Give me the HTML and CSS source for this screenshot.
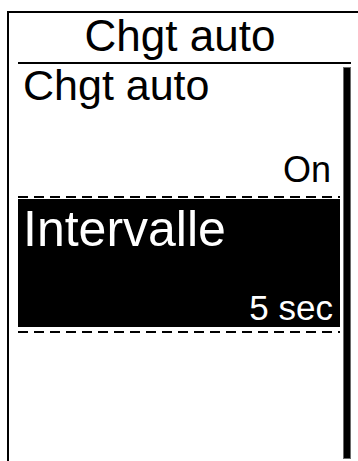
FILE: index.html
```
<!DOCTYPE html>
<html lang="fr">
<head>
    <meta charset="UTF-8">
    <meta name="viewport" content="width=device-width, initial-scale=1.0">
    <title>Chgt auto</title>
    <link rel="stylesheet" href="styles.css">
</head>
<body>
    <div class="screen">
        <div class="title">Chgt auto</div>
        <div class="rule"></div>
        <div class="content">
            <div class="menu">
                <div class="item">
                    <span class="label">Chgt auto</span>
                    <span class="value">On</span>
                </div>
                <div class="sep"></div>
                <div class="item selected">
                    <span class="label">Intervalle</span>
                    <span class="value">5 sec</span>
                </div>
                <div class="sep sep-last"></div>
            </div>
            <div class="scrollbar"></div>
        </div>
    </div>
</body>
</html>
```
FILE: styles.css
```
html,
body {
    margin: 0;
    padding: 0;
    background-color: #ffffff;
    overflow: hidden;
}

body {
    font-family: "Liberation Sans", Arial, sans-serif;
    color: #000;
    width: 358px;
    height: 461px;
}

.screen {
    margin: 11px 0 0 7px;
    border-left: 2px solid #000;
    border-top: 2px solid #000;
    width: 349px;
    height: 448px;
}

.title {
    width: 342px;
    height: 49px;
    line-height: 45px;
    font-size: 44px;
    text-align: center;
}

.rule {
    width: 333px;
    height: 2px;
    margin-left: 9px;
    background-color: #000;
}

.content {
    display: flex;
    align-items: flex-start;
    margin-left: 9px;
}

.menu {
    width: 322px;
}

.item {
    display: flex;
    flex-direction: column;
    justify-content: space-between;
    box-sizing: border-box;
    height: 130px;
    padding: 0 9px 6px 5px;
}

.item .label {
    font-size: 43px;
    line-height: 43px;
}

.item .value {
    align-self: flex-end;
    font-size: 36px;
    line-height: 36px;
}

.item.selected {
    height: 128px;
    padding: 6px 7px 2px 5px;
    margin-top: 1px;
    background-color: #000;
    color: #fff;
}

.item.selected .label {
    font-size: 50px;
    line-height: 49px;
}

.item.selected .value {
    font-size: 35px;
    line-height: 35px;
}

.sep {
    height: 2px;
    margin-top: 2px;
    background: repeating-linear-gradient(to right, #000 0, #000 10px, transparent 10px, transparent 16px);
}

.sep-last {
    margin-top: 4px;
}

.scrollbar {
    box-sizing: border-box;
    width: 8px;
    height: 392px;
    margin: 3px 0 0 3px;
    background-color: #000;
    border: 1px solid #6a6a6a;
}
```
